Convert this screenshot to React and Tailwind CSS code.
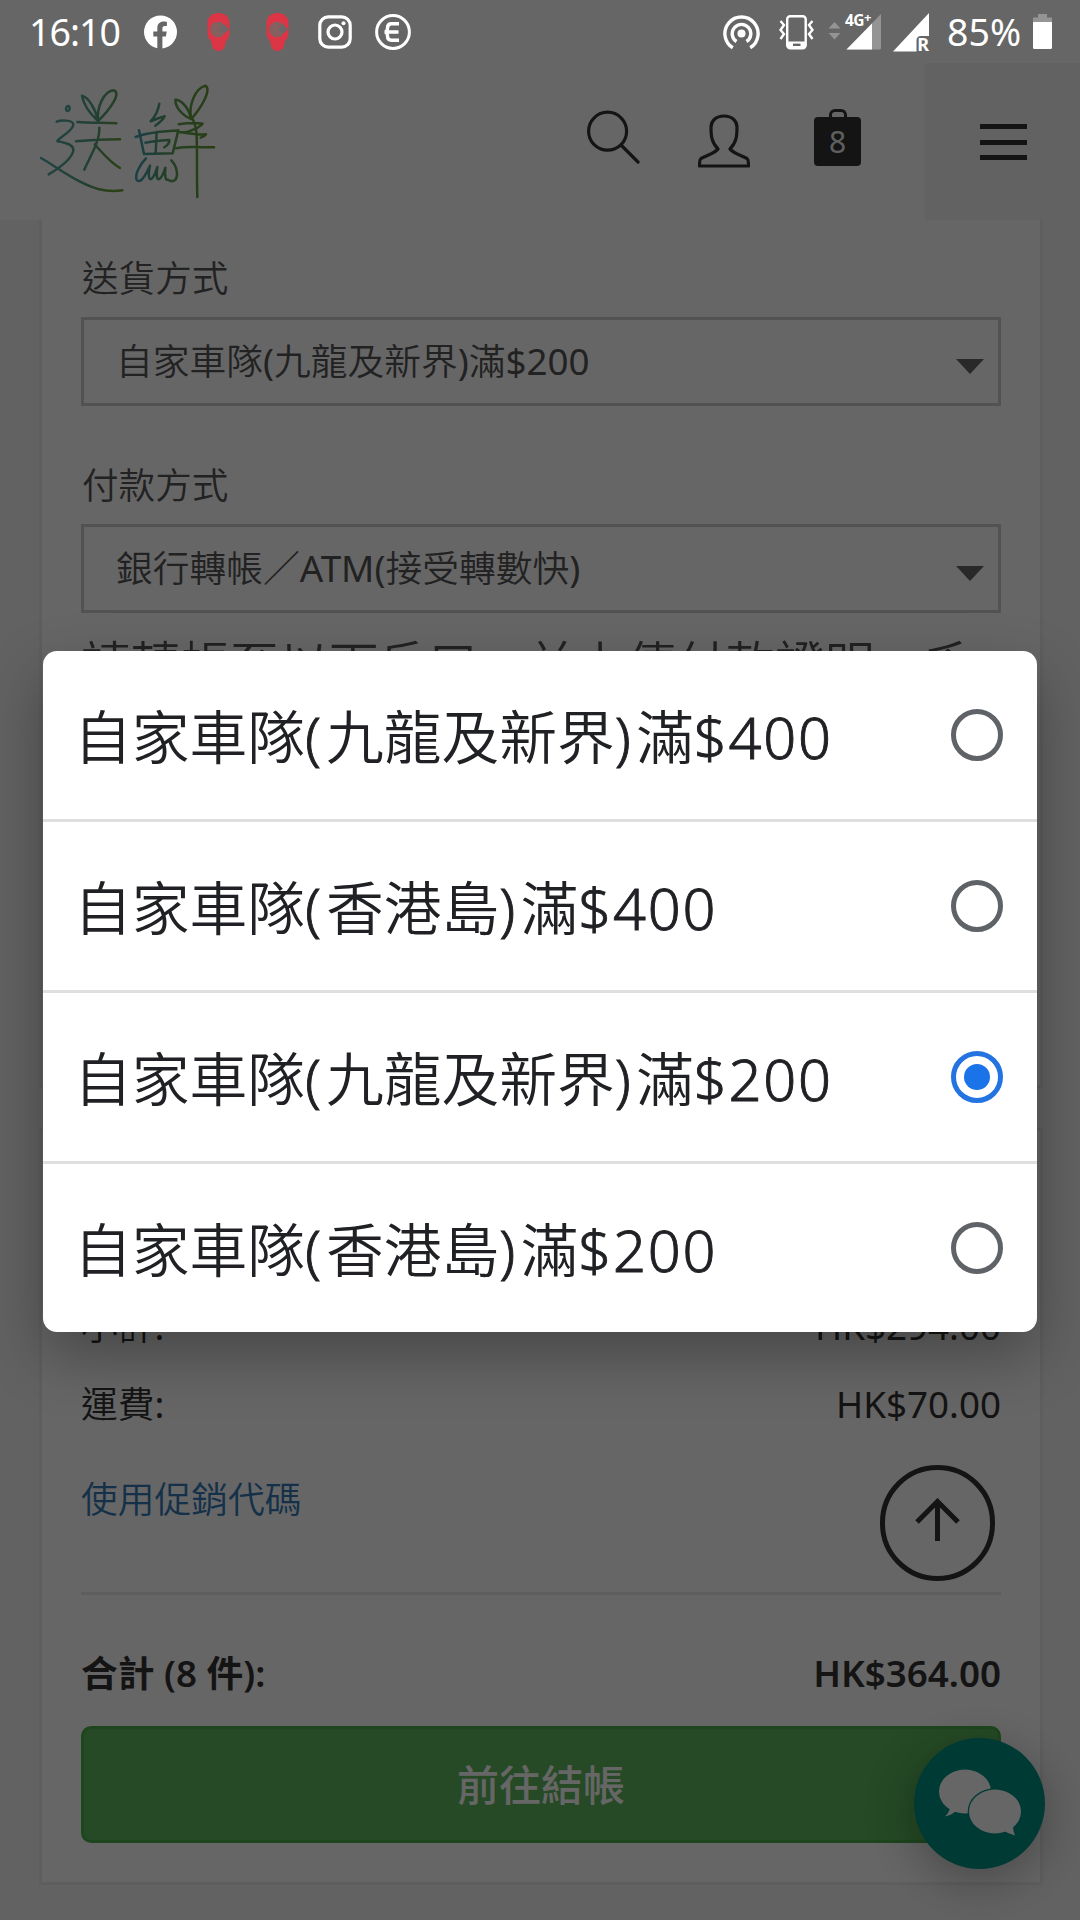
const OPTIONS = [
  { label: "自家車隊(九龍及新界)滿$400", checked: false },
  { label: "自家車隊(香港島)滿$400", checked: false },
  { label: "自家車隊(九龍及新界)滿$200", checked: true },
  { label: "自家車隊(香港島)滿$200", checked: false },
];

const PinIcon = ({ className }) => (
  <svg className={`h-[38px] w-[23px] ${className}`} viewBox="0 0 23 38">
    <path
      d="M11.500 0C18 0 22.500 4 22.500 10v10c0 4-2 6-4 9 0 5.500-2.500 9-7 9s-7-3.500-7-9c-2-3-4-5-4-9V10C.5 4 5 0 11.500 0z"
      fill="#dc3545"
    />
    <circle cx="11" cy="16.500" r="7.800" fill="#84605f" />
    <path d="M12 16.500L17 11l5 5.500-5 4z" fill="#6c6668" />
  </svg>
);

const StatusBar = () => (
  <div className="absolute inset-x-0 top-0 z-30 flex h-[63px] text-white">
    <div className="flex items-center pl-[29px]">
      <span className="w-[115px] text-[37.500px] leading-none tracking-[-1px]">16:10</span>
      {/* Facebook */}
      <svg className="h-[34px] w-[33px]" viewBox="0 0 33 34">
        <circle cx="16.500" cy="17" r="16.500" fill="#fff" />
        <path
          d="M13.300 34V21.400H9.300v-5h4v-3c0-4.600 2.600-6.800 6.400-6.800 1.600 0 3.200.3 3.200.3v4.200h-2c-1.900 0-2.500 1.200-2.500 2.400v2.900h4.300l-.8 5h-3.500V34z"
          fill="#666"
        />
      </svg>
      <PinIcon className="ml-[30px]" />
      <PinIcon className="ml-9" />
      {/* Instagram */}
      <svg className="ml-[29px] h-[34px] w-[34px]" viewBox="0 0 34 34" fill="none" stroke="#fff" strokeWidth="3.200">
        <rect x="1.800" y="1.800" width="30.400" height="30.400" rx="8.500" />
        <circle cx="17" cy="17" r="7" />
        <circle cx="25.500" cy="8.300" r="2" fill="#fff" stroke="none" />
      </svg>
      <svg className="ml-[23px] h-9 w-9" viewBox="0 0 36 36" fill="none" stroke="#fff">
        <circle cx="18" cy="18" r="16.400" strokeWidth="3" />
        <path d="M24 9.700h-7.500q-4 0-4 4.200 0 4.100-3 4.100 3 0 3 4.100 0 4.200 4 4.200H24M13 18h10.500" strokeWidth="3.400" />
      </svg>
    </div>
    <div className="ml-auto flex items-center pr-7">
      {/* Hotspot */}
      <svg className="h-9 w-[37px]" viewBox="0 0 37 36" fill="none" stroke="#fff" strokeWidth="3.400">
        <circle cx="18.500" cy="19.500" r="4" fill="#fff" stroke="none" />
        <path d="M13.500 27.500a9.300 9.300 0 1 1 10 0M9.800 33.800a16.600 16.600 0 1 1 17.400 0" />
      </svg>
      {/* Vibrate */}
      <svg className="ml-[19px] h-9 w-[35px]" viewBox="0 0 35 36" fill="none" stroke="#fff" strokeWidth="2.400">
        <path d="M1.500 7l3.500 4-3.500 5 3.500 4-3.500 5M33.500 7L30 11l3.500 5-3.500 4 3.500 5" />
        <rect x="8.200" y="2.200" width="18.500" height="32" rx="3" />
        <path d="M8 27.500h19V33H8z" fill="#fff" stroke="none" />
        <path d="M14 30.800h7.500" stroke="#666" />
      </svg>
      {/* Mobile signal with network type */}
      <div className="relative ml-[14px] h-9 w-[53px]">
        <svg className="h-9 w-[53px]" viewBox="0 0 53 36">
          <path d="M.5 14.500L6.500 8l6 6.500zM.5 19L6.500 25.500l6-6.500z" fill="#949494" />
          <path d="M18.500 35.500L53 0v34q0 1.500-1.500 1.500z" fill="#949494" />
          <path d="M18.500 35.500L44 9.500v26z" fill="#fff" />
        </svg>
        <span className="absolute top-[-1px] left-[17px] flex text-[15.500px] leading-none font-bold tracking-[-0.500px]">
          4G<span className="mt-[-2px] text-[13px]">+</span>
        </span>
      </div>
      <div className="relative ml-3 h-10 w-9">
        <svg className="h-10 w-9" viewBox="0 0 36 40">
          <path d="M0 39.500L36 1v23H28q-4.500 0-4.500 4.500v11z" fill="#fff" />
        </svg>
        <span className="absolute right-0 bottom-[-1px] text-[18px] leading-[17px] font-bold">R</span>
      </div>
      <span className="ml-[18px] w-[86px] text-[37.500px] leading-none">85%</span>
      <svg className="h-[35px] w-[19px]" viewBox="0 0 19 35">
        <path d="M5 0h9v3.500h5V9H0V3.500h5z" fill="#949494" />
        <path d="M0 8h19v25.500q0 1.500-1.500 1.500h-16Q0 35 0 33.500z" fill="#fff" />
      </svg>
    </div>
  </div>
);

// Handwritten brand mark
const Logo = () => (
  <svg
    className="h-[120px] w-[180px]"
    viewBox="24 27 540 360"
    fill="none"
    strokeWidth="7.500"
    strokeLinecap="round"
    strokeLinejoin="round"
  >
    <defs>
      <linearGradient id="songA" gradientUnits="userSpaceOnUse" x1="60" y1="180" x2="270" y2="220">
        <stop offset="0" stopColor="#55a8a4" />
        <stop offset="0.600" stopColor="#55a080" />
        <stop offset="1" stopColor="#69a035" />
      </linearGradient>
      <linearGradient id="songB" gradientUnits="userSpaceOnUse" x1="320" y1="200" x2="550" y2="200">
        <stop offset="0" stopColor="#459fb0" />
        <stop offset="0.500" stopColor="#5f9e50" />
        <stop offset="1" stopColor="#629c32" />
      </linearGradient>
    </defs>
    <g stroke="url(#songA)">
      <path d="M112 94c-6 3-5 14 2 14 6-2 7-12 2-15z" />
      <path d="M80 140c12-5 48-6 50 8 1 18-40 38-48 50 10 4 50 6 48 28-4 26-44 54-74 72" />
      <path d="M33 249c38 22 70 46 110 67 46 24 80 37 134 30" />
      <path d="M142 141c40 3 80 2 117 4M138 199c44-4 90-6 132-6M208 158c2 42-30 90-45 126M194 208c22 24 48 56 76 71" />
      <path d="M204 138c-26-24-44-50-48-76 20 6 40 38 48 76zM204 138c-4-44 18-88 46-92 28 6-14 62-46 92z" />
    </g>
    <g stroke="url(#songB)">
      <path d="M388 86c-4 22-12 38-26 53 16-7 30-12 42-15-4 10-14 18-28 28" />
      <path d="M327 166l15 71 86-2 17-69c-40 2-90 4-128 20M380 170l-3 64M346 203c24-4 50-8 72-8 2 10-6 16-15 22" />
      <path d="M348 250c-20 20-34 50-28 64 10 14 24-8 40-42-6 28-4 44 4 40 10-8 14-24 18-36-4 24-2 40 6 36 10-6 14-22 18-34-2 22 0 38 6 36M424 256c18 18 22 50 10 60-6 4-14 2-20-2" />
      <path d="M484 132c-28-10-48-36-48-58 18 0 40 24 48 58zM484 132c-10-40 12-92 42-100 20 12-12 66-42 100z" />
      <path d="M446 148c24-4 50-6 72-2-8 12-26 18-44 24-10 2-18 2-24 2 24 2 52 8 78 6-4 6-10 8-16 10M438 220c38-8 78-2 114-3M484 126c10 14 15 30 16 60 2 60 0 120 2 180" />
    </g>
  </svg>
);

const Header = () => (
  <header className="flex h-[157px] bg-white text-[#333]">
    <div className="mt-[21px] ml-[38px]">
      <Logo />
    </div>
    <div className="ml-auto flex">
      <svg className="mt-[47px] h-[56px] w-[53px]" viewBox="0 0 53 56" fill="none" stroke="currentColor" strokeWidth="3.200" strokeLinecap="round">
        <circle cx="20.600" cy="21.200" r="19" />
        <path d="M34.500 35.500l16.500 16.500" />
      </svg>
      <svg className="mt-[50px] ml-[58px] h-[56px] w-[52px]" viewBox="0 0 52 56" fill="none" stroke="currentColor" strokeWidth="3.200" strokeLinejoin="round">
        <path d="M26 3c8 0 13 5 13 11 0 9-.5 15.500-7 22 3 4 10 6 17 9.500 1.500 1 1.500 3 1.500 7.500H1.500c0-4.500 0-6.500 1.500-7.500 7-3.500 14-5.500 17-9.500-6.500-6.500-7-13-7-22 0-6 5-11 13-11z" />
      </svg>
      <div className="mt-[46px] ml-16 flex h-[57px] w-[47px] flex-col items-center">
        <div className="h-2 w-[18px] rounded-t-md border-[3px] border-b-0 border-[#333]" />
        <div className="flex h-[49px] w-[47px] items-center justify-center rounded bg-[#333] text-[30px] leading-none text-[#eee]">
          8
        </div>
      </div>
    </div>
    <div className="ml-16 flex w-[155px] flex-col gap-[10.500px] bg-[#f6f6f6] pt-[61px] pl-[55px]">
      <div className="h-[5px] w-[47px] bg-[#333]" />
      <div className="h-[5px] w-[47px] bg-[#333]" />
      <div className="h-[5px] w-[47px] bg-[#333]" />
    </div>
  </header>
);

const SelectField = ({ label, value }) => (
  <div className="h-[207px]">
    <div className="h-[58px] pl-px text-[36.600px] leading-[38px]">{label}</div>
    <div className="flex h-[89px] items-center justify-between border-[3px] border-[#ccc] pr-[14px] pl-[32px]">
      <span className="leading-none">{value}</span>
      <svg className="mt-[10px] h-[15px] w-7" viewBox="0 0 28 15">
        <path d="M0 0h28L14 15z" fill="#666" />
      </svg>
    </div>
  </div>
);

// Parentheses and prices are lighter and set wider than the Chinese runs
const OptionLabel = ({ text }) => (
  <span className="pt-[3px] pl-[31px] leading-none font-[350]">
    {text.split(/([()]|\$\d+)/).map((run, i) =>
      i % 2 ? (
        <span
          key={i}
          className={`font-light [-webkit-text-stroke:0.9px_#202124] ${
            run.startsWith("$") ? "tracking-[1.800px]" : "tracking-[5px]"
          }`}
        >
          {run}
        </span>
      ) : (
        run
      )
    )}
  </span>
);

const PickerDialog = () => (
  <div className="absolute top-[651px] left-[43px] z-20 w-[994px] divide-y-[3px] divide-[#dfdfdf] overflow-hidden rounded-[14px] bg-white text-[57.750px] text-[#202124] shadow-[0_24px_60px_rgba(0,0,0,0.300)]">
    {OPTIONS.map((option) => (
      <div key={option.label} className="box-content flex h-[168px] items-center justify-between">
        <OptionLabel text={option.label} />
        <span
          className={`mr-[34px] flex h-[52px] w-[52px] items-center justify-center rounded-full border-[5px] ${
            option.checked ? "border-[#2374e1]" : "border-[#5f6368]"
          }`}
        >
          {option.checked && <span className="h-[26px] w-[26px] rounded-full bg-[#1a73e8]" />}
        </span>
      </div>
    ))}
  </div>
);

export default function App() {
  return (
    <div className="relative h-[1920px] w-[1080px] overflow-hidden bg-[#f6f6f6] pt-[63px] font-['Noto_Sans','Noto_Sans_CJK_TC',sans-serif] text-[36.750px] text-[#333]">
      <div className="absolute inset-x-0 top-0 h-[63px] bg-white" />
      <Header />

      <main className="pr-[37px] pl-[39px] font-['Noto_Sans','Noto_Sans_CJK_TC_DemiLight','Noto_Sans_CJK_TC',sans-serif]">
        <section className="h-[868px] border-x-[3px] border-b-[3px] border-[#ececec] bg-white px-[39px] pt-[39px] text-[#555]">
          <SelectField label="送貨方式" value="自家車隊(九龍及新界)滿$200" />
          <SelectField label="付款方式" value="銀行轉帳／ATM(接受轉數快)" />
          <p className="mt-[-39px] text-[49.600px] leading-[60px] whitespace-nowrap">
            請轉帳至以下戶口，並上傳付款證明，系
          </p>
        </section>

        <section className="mt-10 h-[757px] border-[3px] border-[#ececec] bg-white px-[39px] pt-[158px]">
          <div className="flex h-[76px] items-center justify-between">
            <span>小計:</span>
            <span>HK$294.00</span>
          </div>
          <div className="mt-[15px] flex h-[50px] items-center justify-between">
            <span>運費:</span>
            <span>HK$70.00</span>
          </div>
          <a className="mt-11 block h-[50px] leading-[50px] text-[#337ab7]">使用促銷代碼</a>
          <div className="mt-[68px] border-t-[3px] border-[#ececec]" />
          <div className="mt-[54px] flex h-[50px] items-center justify-between font-['Noto_Sans','Noto_Sans_CJK_TC',sans-serif] font-semibold">
            <span>合計 (8 件):</span>
            <span>HK$364.00</span>
          </div>
          <button className="mt-[27px] h-[117px] w-full rounded-[10px] border-[3px] border-[#4cae4c] bg-[#5cb85c] font-['Noto_Sans','Noto_Sans_CJK_TC',sans-serif] text-[42px] font-medium text-white">
            前往結帳
          </button>
        </section>
      </main>

      {/* Back to top */}
      <div className="absolute top-[1465px] left-[880px] flex h-[116px] w-[115px] items-center justify-center rounded-full border-[5px] border-[#333]">
        <svg className="mb-1.5 h-11 w-[45px]" viewBox="0 0 45 44" fill="none" stroke="#333" strokeWidth="5">
          <path d="M22.500 43V4M2 24L22.500 3.500 43 24" />
        </svg>
      </div>

      {/* Chat bubble */}
      <div className="absolute top-[1738px] left-[914px] flex h-[131px] w-[131px] items-center justify-center rounded-full bg-[#009183] shadow-[0_12px_50px_rgba(0,0,0,0.300)]">
        <svg className="mb-0.5 h-[68px] w-[84px]" viewBox="0 0 84 68" fill="#fff">
          <ellipse cx="27" cy="22.500" rx="26" ry="22" />
          <path d="M12 37Q12 43 7 47.500 14 46 19 41z" />
          <ellipse cx="57" cy="42.500" rx="27.300" ry="23.300" fill="#009183" />
          <ellipse cx="57" cy="42.500" rx="26" ry="22" />
          <path d="M75 57q0 6 2 9.500Q70 65 65 61z" />
        </svg>
      </div>

      <div className="absolute inset-0 z-10 bg-black/60" />
      <PickerDialog />
      <StatusBar />
    </div>
  );
}
